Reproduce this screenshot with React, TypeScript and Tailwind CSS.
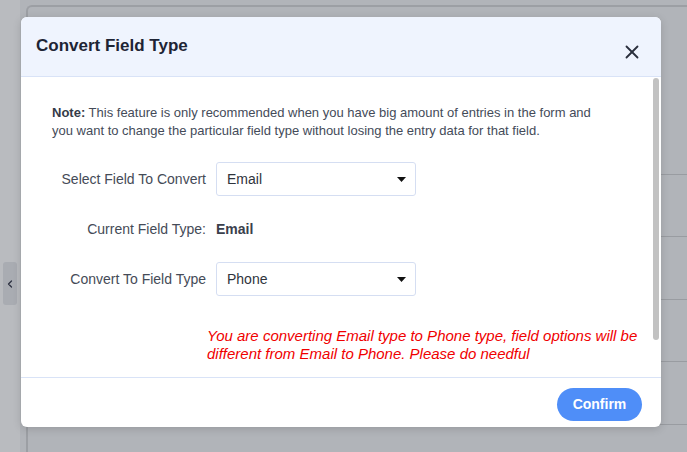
import React from "react";
import { X, ChevronLeft } from "lucide-react";

const font = { fontFamily: '"Liberation Sans", Arial, sans-serif' };

function Caret() {
  return (
    <svg width="9" height="5" viewBox="0 0 9 5" className="shrink-0">
      <path d="M0 0 H9 L4.5 5 Z" fill="#111" />
    </svg>
  );
}

function SelectBox({ value }: { value: string }) {
  return (
    <div className="flex h-[34px] w-[200px] items-center justify-between rounded-[3px] border border-[#d5def2] bg-white pl-[10px] pr-[9px] text-[14px] text-[#2f343c]">
      <span>{value}</span>
      <Caret />
    </div>
  );
}

export default function App() {
  const rows = [0, 1, 2, 3, 4, 5];

  return (
    <div className="relative flex h-[452px] w-[687px] overflow-hidden bg-[#b1b4b9]" style={font}>
      {/* pagina de fondo, oscurecida por el overlay */}
      <div className="h-full w-[20px] shrink-0 bg-[#b9bbbf]" />
      <div className="flex-1 pl-[6px] pt-[5px]">
        <div className="h-full rounded-tl-[6px] border-l-2 border-t-2 border-[#9c9fa4] pt-[105px] pl-[56px]">
          {rows.map((r) => (
            <div key={r} className="h-[62.6px] border-b border-[#999ca1]" />
          ))}
        </div>
      </div>

      {/* pestaña del sidebar */}
      <div className="absolute left-[3px] top-[262px] flex h-[43px] w-[14px] items-center justify-center rounded-[3px] bg-[#a9acb2] text-[#2c3140]">
        <ChevronLeft size={12} strokeWidth={2.5} />
      </div>

      {/* Modal */}
      <div className="absolute left-[21px] top-[17px] flex h-[410px] w-[640px] flex-col overflow-hidden rounded-[6px] bg-white shadow-[0_2px_8px_rgba(0,0,0,0.15)]">
        <div className="flex h-[60px] shrink-0 items-center justify-between border-b border-[#d9e3f7] bg-[#eff4fe] pl-[15px] pr-[18px]">
          <h2 className="pb-[1px] text-[17px] font-bold text-[#1e2435]">Convert Field Type</h2>
          <X size={22} strokeWidth={2} className="mt-[10px] text-[#2a2f3d]" />
        </div>

        <div className="relative flex-1">
          <div className="absolute right-[2px] top-[1px] h-[262px] w-[6px] rounded-[3px] bg-[#c2c2c2]" />
          <div className="pl-[31px] pt-[27px]">
            <p className="w-[545px] text-[13px] leading-[18px] text-[#444b59]">
              <span className="font-bold text-[#353b48]">Note:</span> This feature is only recommended when you have big amount of entries in the form and you want to change the particular field type without losing the entry data for that field.
            </p>

            <div className="mt-[22px] flex items-center">
              <label className="w-[154px] text-right text-[14px] text-[#454b57]">Select Field To Convert</label>
              <div className="ml-[10px]">
                <SelectBox value="Email" />
              </div>
            </div>

            <div className="mt-[24px] flex h-[18px] items-center">
              <label className="w-[154px] text-right text-[14px] text-[#454b57]">Current Field Type:</label>
              <span className="ml-[10px] text-[14px] font-bold text-[#3a404c]">Email</span>
            </div>

            <div className="mt-[24px] flex items-center">
              <label className="w-[154px] text-right text-[14px] text-[#454b57]">Convert To Field Type</label>
              <div className="ml-[10px]">
                <SelectBox value="Phone" />
              </div>
            </div>

            <p className="ml-[155px] mt-[31px] w-[440px] text-[15px] italic leading-[18px] text-[#f00000]">
              You are converting Email type to Phone type, field options will be different from Email to Phone. Please do needful
            </p>
          </div>
        </div>

        <div className="flex h-[50px] shrink-0 items-center justify-end border-t border-[#d9e3f7] pr-[19px]">
          <button className="mt-[4px] h-[33px] w-[85px] rounded-full bg-[#4f8ef8] text-[14px] font-bold text-white">
            Confirm
          </button>
        </div>
      </div>
    </div>
  );
}
